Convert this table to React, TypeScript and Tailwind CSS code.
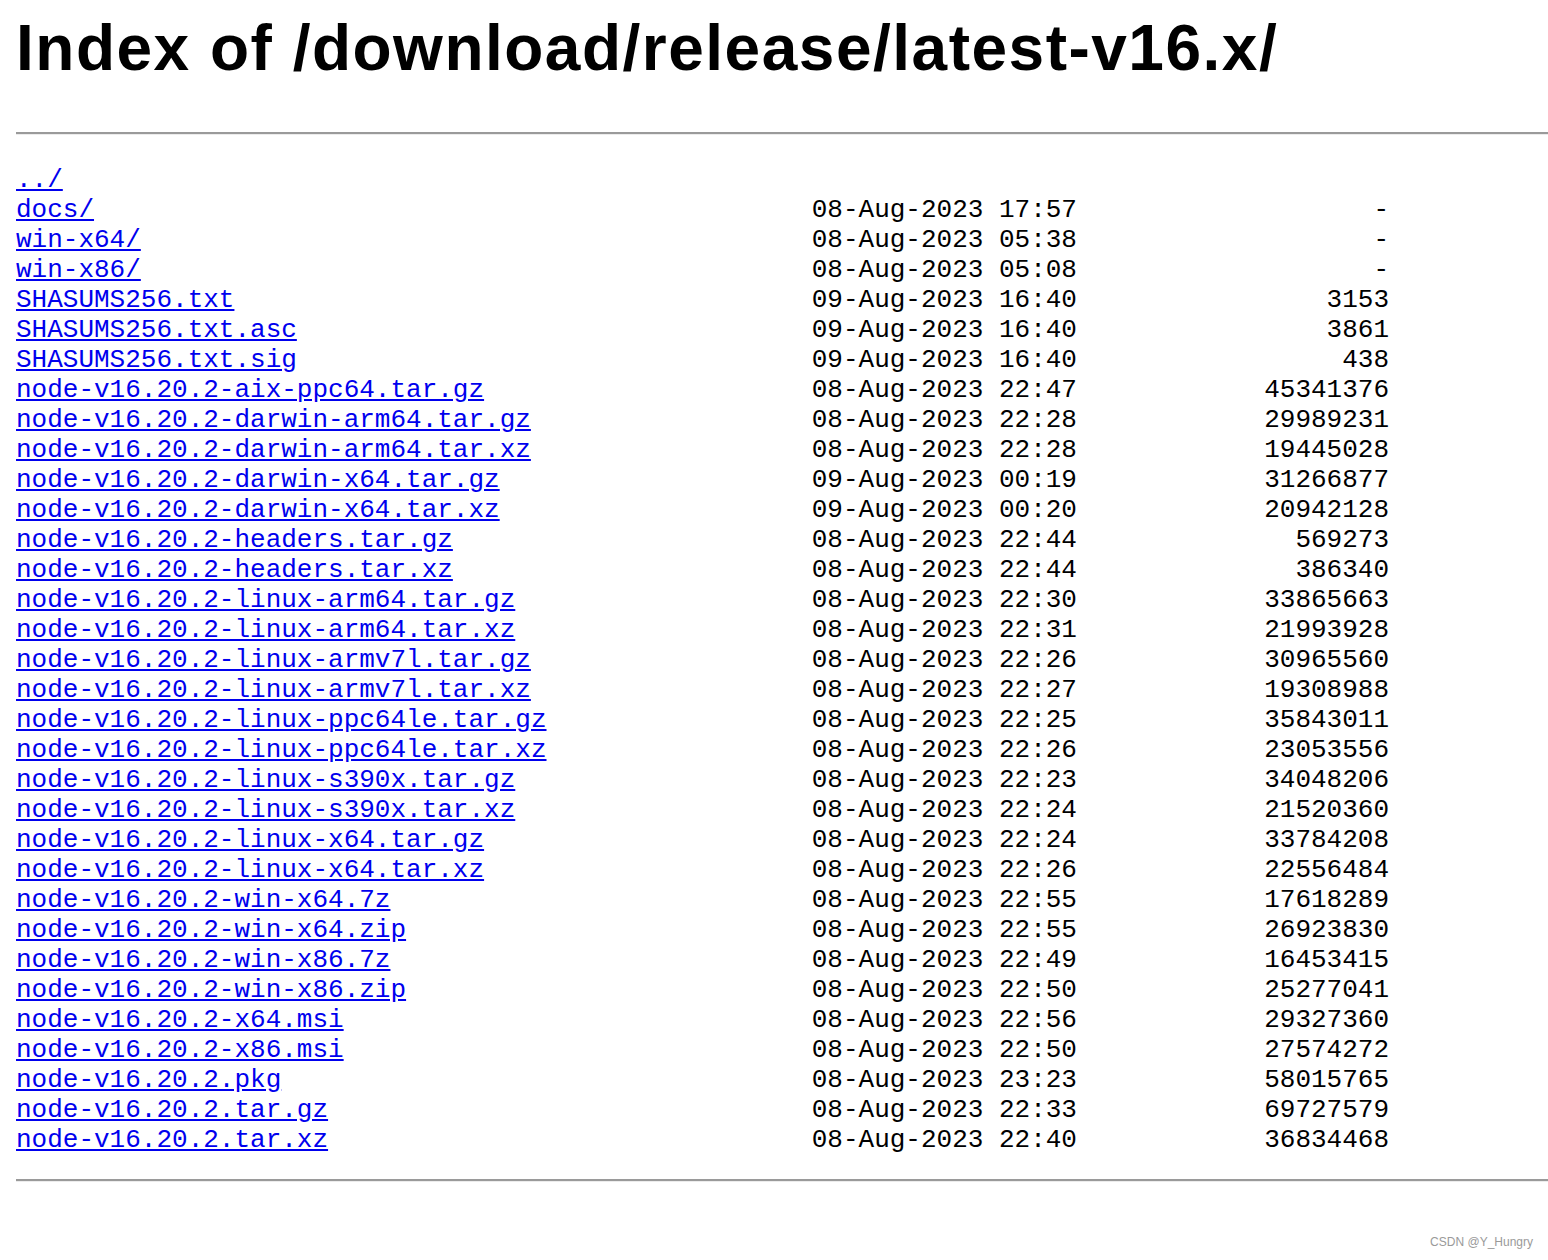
const rows: [string, string, string][] = [
  ["docs/", "08-Aug-2023 17:57", "-"],
  ["win-x64/", "08-Aug-2023 05:38", "-"],
  ["win-x86/", "08-Aug-2023 05:08", "-"],
  ["SHASUMS256.txt", "09-Aug-2023 16:40", "3153"],
  ["SHASUMS256.txt.asc", "09-Aug-2023 16:40", "3861"],
  ["SHASUMS256.txt.sig", "09-Aug-2023 16:40", "438"],
  ["node-v16.20.2-aix-ppc64.tar.gz", "08-Aug-2023 22:47", "45341376"],
  ["node-v16.20.2-darwin-arm64.tar.gz", "08-Aug-2023 22:28", "29989231"],
  ["node-v16.20.2-darwin-arm64.tar.xz", "08-Aug-2023 22:28", "19445028"],
  ["node-v16.20.2-darwin-x64.tar.gz", "09-Aug-2023 00:19", "31266877"],
  ["node-v16.20.2-darwin-x64.tar.xz", "09-Aug-2023 00:20", "20942128"],
  ["node-v16.20.2-headers.tar.gz", "08-Aug-2023 22:44", "569273"],
  ["node-v16.20.2-headers.tar.xz", "08-Aug-2023 22:44", "386340"],
  ["node-v16.20.2-linux-arm64.tar.gz", "08-Aug-2023 22:30", "33865663"],
  ["node-v16.20.2-linux-arm64.tar.xz", "08-Aug-2023 22:31", "21993928"],
  ["node-v16.20.2-linux-armv7l.tar.gz", "08-Aug-2023 22:26", "30965560"],
  ["node-v16.20.2-linux-armv7l.tar.xz", "08-Aug-2023 22:27", "19308988"],
  ["node-v16.20.2-linux-ppc64le.tar.gz", "08-Aug-2023 22:25", "35843011"],
  ["node-v16.20.2-linux-ppc64le.tar.xz", "08-Aug-2023 22:26", "23053556"],
  ["node-v16.20.2-linux-s390x.tar.gz", "08-Aug-2023 22:23", "34048206"],
  ["node-v16.20.2-linux-s390x.tar.xz", "08-Aug-2023 22:24", "21520360"],
  ["node-v16.20.2-linux-x64.tar.gz", "08-Aug-2023 22:24", "33784208"],
  ["node-v16.20.2-linux-x64.tar.xz", "08-Aug-2023 22:26", "22556484"],
  ["node-v16.20.2-win-x64.7z", "08-Aug-2023 22:55", "17618289"],
  ["node-v16.20.2-win-x64.zip", "08-Aug-2023 22:55", "26923830"],
  ["node-v16.20.2-win-x86.7z", "08-Aug-2023 22:49", "16453415"],
  ["node-v16.20.2-win-x86.zip", "08-Aug-2023 22:50", "25277041"],
  ["node-v16.20.2-x64.msi", "08-Aug-2023 22:56", "29327360"],
  ["node-v16.20.2-x86.msi", "08-Aug-2023 22:50", "27574272"],
  ["node-v16.20.2.pkg", "08-Aug-2023 23:23", "58015765"],
  ["node-v16.20.2.tar.gz", "08-Aug-2023 22:33", "69727579"],
  ["node-v16.20.2.tar.xz", "08-Aug-2023 22:40", "36834468"],
];

function Rule() {
  return <div className="ml-4 h-0 border-t-2 border-b border-t-[#9a9a9a] border-b-[#ececec]" />;
}

export default function App() {
  return (
    <div className="relative min-h-[1260px] bg-white text-black">
      <h1 className="px-4 pt-[11px] pb-[47px] text-[64px] font-bold leading-[74px] tracking-[1.5px] font-['Liberation_Sans',Arial,sans-serif]">
        Index of /download/release/latest-v16.x/
      </h1>
      <Rule />
      <div className="px-4 pt-[30px] pb-[24px] font-['Liberation_Mono','Courier_New',monospace] text-[26px] leading-[30px]">
        <div className="h-[30px]">
          <a href="#" className="text-[#0000ee] underline">../</a>
        </div>
        {rows.map(([name, date, size]) => (
          <div key={name} className="flex h-[30px] whitespace-pre">
            <div className="w-[51ch]">
              <a href="#" className="text-[#0000ee] underline">{name}</a>
            </div>
            <div className="w-[17ch]">{date}</div>
            <div className="w-[20ch] text-right">{size}</div>
          </div>
        ))}
      </div>
      <Rule />
      <div className="absolute right-[15px] bottom-[9px] text-[12px] text-[#9a9a9a] font-['Liberation_Sans',Arial,sans-serif]">
        CSDN @Y_Hungry
      </div>
    </div>
  );
}
